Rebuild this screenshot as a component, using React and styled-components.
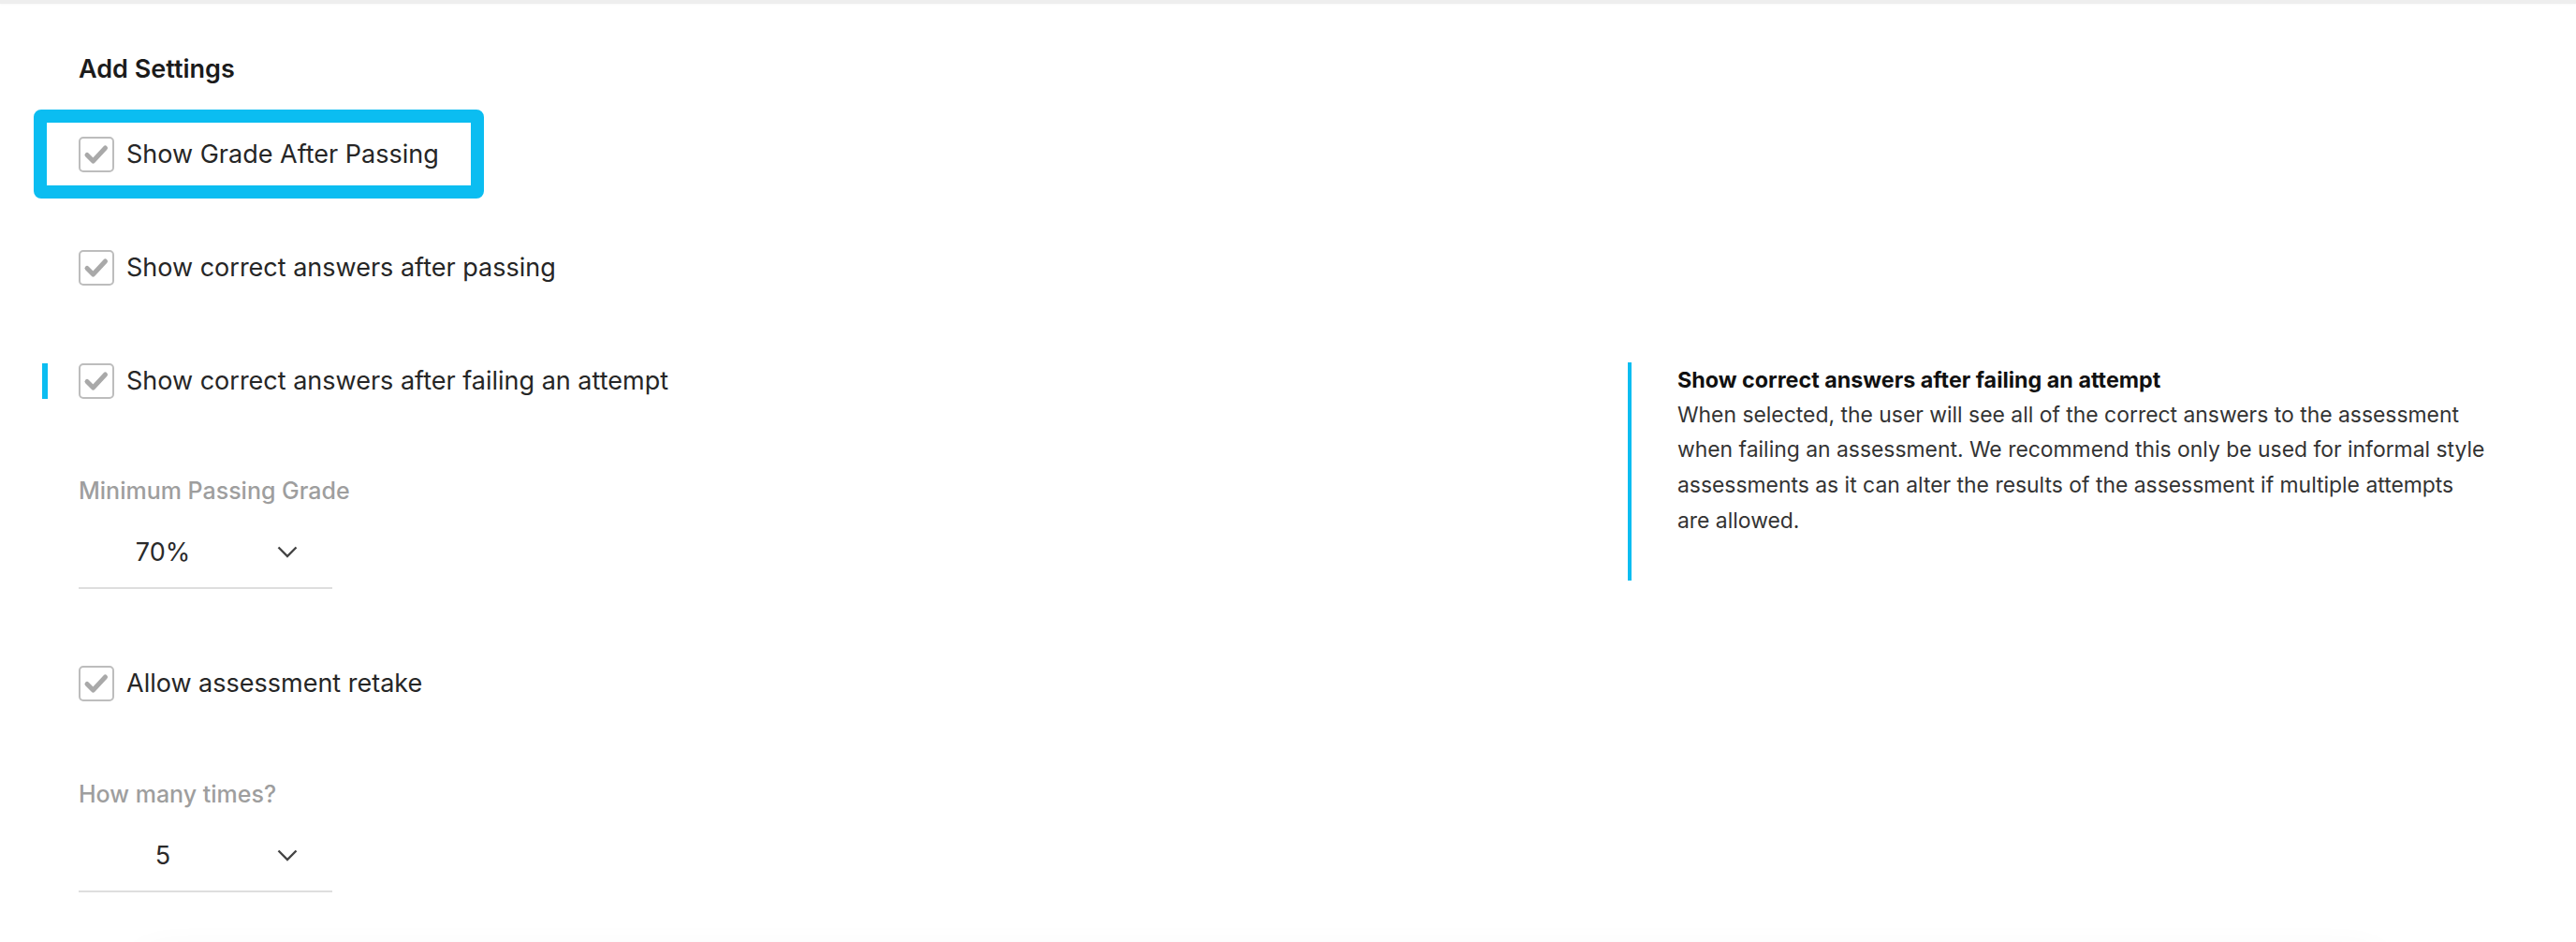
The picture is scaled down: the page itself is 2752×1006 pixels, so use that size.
import React from "react";
import styled, { createGlobalStyle } from "styled-components";

const GlobalStyle = createGlobalStyle`
  html, body {
    margin: 0;
    padding: 0;
    background: #ffffff;
    font-family: Inter, "Noto Sans", "Liberation Sans", sans-serif;
    color: #222222;
    overflow: hidden;
  }
`;

const ACCENT = "#0bbdf1";

const Page = styled.div`
  width: 100%;
  min-height: 1006px;
`;

const TopRule = styled.div`
  height: 4px;
  background: #eeeeee;
  box-shadow: 0 1px 2px rgba(0, 0, 0, 0.03);
`;

const Form = styled.div`
  display: grid;
  grid-template-columns: 1655px 1fr;
  padding: 0 84px;
  align-items: start;
`;

const Heading = styled.h2`
  grid-column: 1;
  margin: 53px 0 0;
  font-size: 27px;
  line-height: 34px;
  font-weight: 600;
  color: #1b1b1b;
`;

const Highlight = styled.div`
  grid-column: 1;
  grid-row: 2;
  justify-self: start;
  margin: 26px 0 0 -48px;
  border: 14px solid ${ACCENT};
  border-radius: 8px;
  padding: 15px 34px 14px;
`;

const Row = styled.label`
  grid-column: 1;
  justify-self: start;
  display: flex;
  align-items: center;
  gap: 13px;
  margin-top: ${(p) => p.$top || 0}px;
  ${(p) =>
    p.$focused &&
    `
    margin-left: -39px;
    border-left: 6px solid ${ACCENT};
    padding-left: 33px;
  `}
`;

const Box = styled.span`
  width: 34px;
  height: 34px;
  border: 2px solid #bdbdbd;
  border-radius: 5px;
  display: flex;
  align-items: center;
  justify-content: center;
  flex-shrink: 0;
`;

const LabelText = styled.span`
  font-size: 27px;
  line-height: 38px;
  color: #262626;
`;

const FieldLabel = styled.div`
  grid-column: 1;
  margin-top: ${(p) => p.$top}px;
  font-size: 25px;
  line-height: 32px;
  font-weight: 500;
  color: #9e9e9e;
`;

const Select = styled.div`
  grid-column: 1;
  justify-self: start;
  margin-top: 12px;
  width: 271px;
  height: 75px;
  border-bottom: 2px solid #dedede;
  display: flex;
  align-items: center;
`;

const Value = styled.span`
  width: 180px;
  text-align: center;
  font-size: 27px;
  color: #2a2a2a;
`;

const Chevron = styled.svg`
  margin-left: 32px;
  width: 22px;
  height: 13px;
`;

const HelpPanel = styled.aside`
  grid-column: 2;
  grid-row: 4 / span 3;
  margin-top: 82px;
  border-left: 4px solid ${ACCENT};
  padding: 0 0 44px 49px;
`;

const HelpTitle = styled.div`
  font-size: 23.3px;
  line-height: 37.7px;
  font-weight: 700;
  color: #111111;
`;

const HelpBody = styled.p`
  margin: 0;
  max-width: 866px;
  font-size: 22.9px;
  line-height: 37.7px;
  color: #333333;
`;

const FooterCard = styled.div`
  margin: 70px 210px 0 150px;
  height: 120px;
  border-radius: 16px;
  background: #ffffff;
  box-shadow: 0 0 44px rgba(0, 0, 0, 0.06);
`;

const Check = () => (
  <svg width="34" height="34" viewBox="0 0 34 34">
    <path
      d="M7 17.5 L13.5 24 L26.5 10"
      fill="none"
      stroke="#a9a9a9"
      strokeWidth="5"
      strokeLinecap="round"
      strokeLinejoin="round"
    />
  </svg>
);

const Checkbox = ({ label, top, focused }) => (
  <Row $top={top} $focused={focused}>
    <Box>
      <Check />
    </Box>
    <LabelText>{label}</LabelText>
  </Row>
);

const Dropdown = ({ value }) => (
  <Select>
    <Value>{value}</Value>
    <Chevron viewBox="0 0 22 13">
      <path d="M1.5 1.5 L11 11 L20.5 1.5" fill="none" stroke="#444" strokeWidth="2.4" />
    </Chevron>
  </Select>
);

export default function App() {
  return (
    <Page>
      <GlobalStyle />
      <TopRule />
      <Form>
        <Heading>Add Settings</Heading>
        <Highlight>
          <Checkbox label="Show Grade After Passing" />
        </Highlight>
        <Checkbox label="Show correct answers after passing" top={55} />
        <Checkbox label="Show correct answers after failing an attempt" top={83} focused />
        <HelpPanel>
          <HelpTitle>Show correct answers after failing an attempt</HelpTitle>
          <HelpBody>
            When selected, the user will see all of the correct answers to the assessment
            when failing an assessment. We recommend this only be used for informal style
            assessments as it can alter the results of the assessment if multiple attempts
            are allowed.
          </HelpBody>
        </HelpPanel>
        <FieldLabel $top={82}>Minimum Passing Grade</FieldLabel>
        <Dropdown value="70%" />
        <Checkbox label="Allow assessment retake" top={82} />
        <FieldLabel $top={83}>How many times?</FieldLabel>
        <Dropdown value="5" />
      </Form>
      <FooterCard />
    </Page>
  );
}
